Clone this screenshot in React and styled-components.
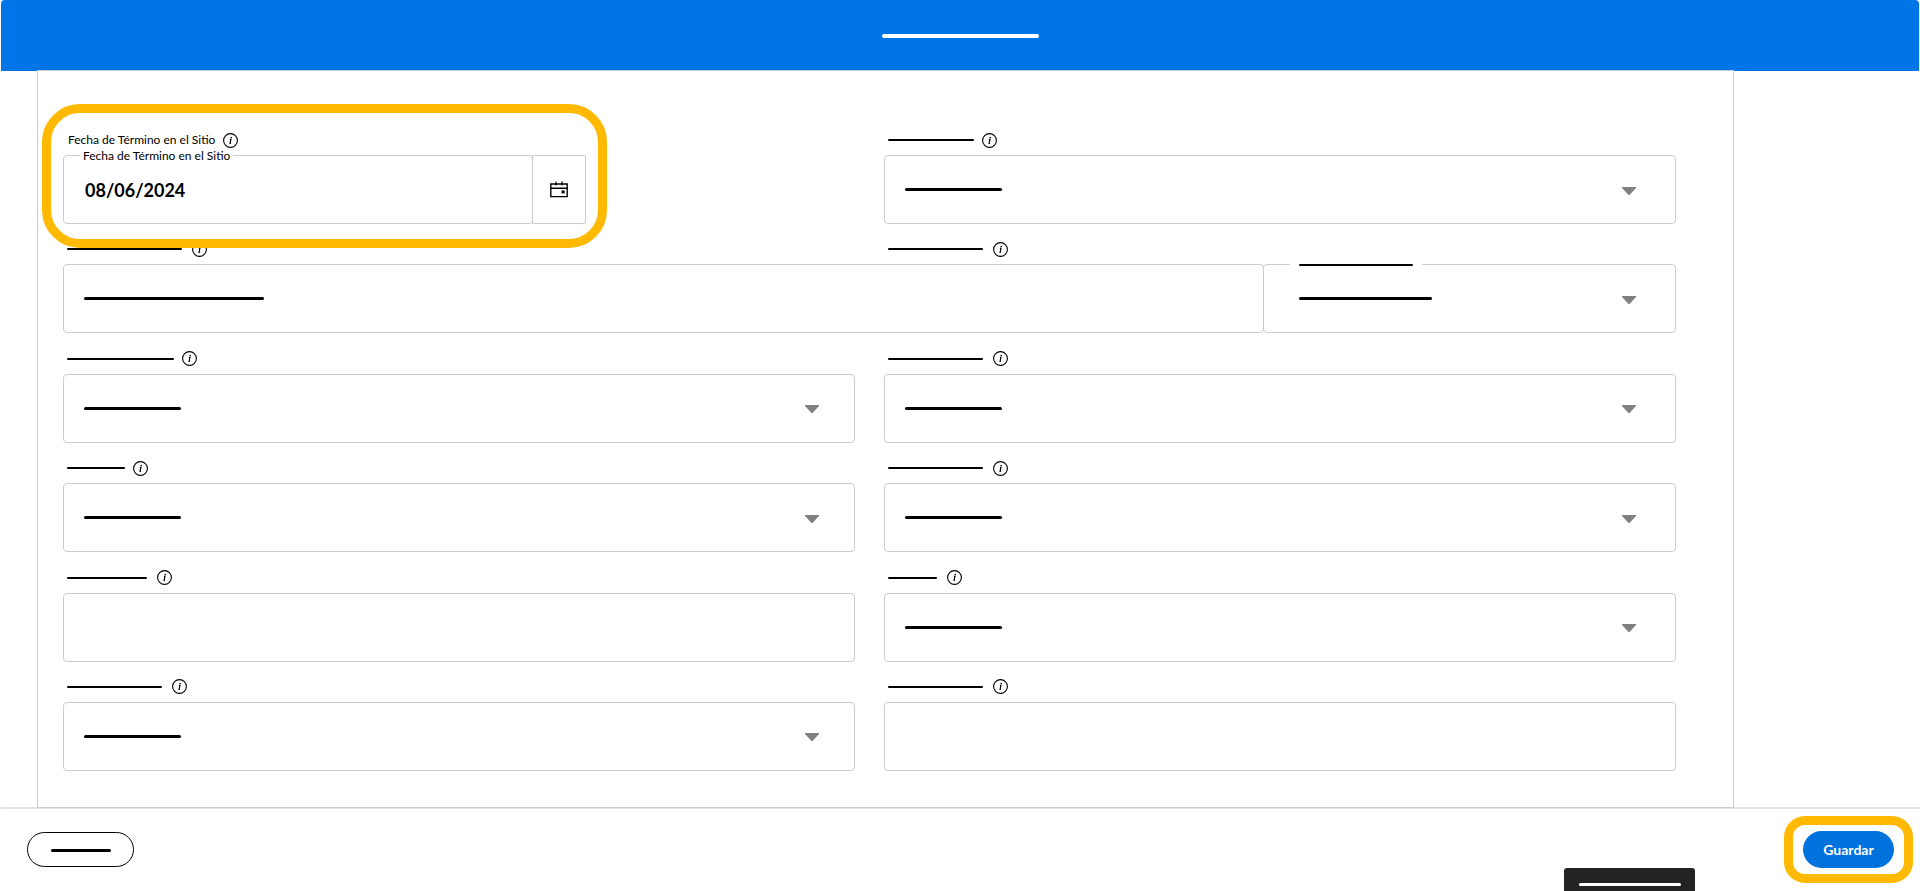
import React from 'react';
import styled, { createGlobalStyle, css } from 'styled-components';

// global styles
const GlobalStyle = createGlobalStyle`
    * {
        box-sizing: border-box;
    }

    body {
        margin: 0;
        background: #fff;
        color: #000;
        font-family: Lato, "Open Sans", sans-serif;
    }
`;

// styled components
const Page = styled.div`
    display: flex;
    flex-direction: column;
    min-height: 100vh;
`;

const Header = styled.header`
    display: flex;
    align-items: center;
    justify-content: center;
    height: 71px;
    margin: 0 1px;
    border-radius: 4px 4px 0 0;
    background: #0075e8;
`;

// stands in for a text that is masked
const Bar = styled.span`
    display: block;
    flex: none;
    width: ${({ $width }) => $width}px;
    height: ${({ $height }) => $height || 3}px;
    border-radius: 2px;
    background: ${({ $light }) => ($light ? '#fff' : '#000')};
`;

const Panel = styled.form`
    position: relative;
    display: grid;
    grid-template-columns: 1fr 1fr;
    column-gap: 29px;
    align-content: space-between;
    flex: 1;
    margin: -1px 186px -1px 37px;
    padding: 61px 57px 36px 25px;
    border: 1px solid #ccc;
    background: #fff;
`;

const Field = styled.div`
    min-width: 0;
`;

const WideField = styled.div`
    grid-column: 1 / -1;
`;

const DateField = styled.div`
    position: relative;
    width: 66%;
`;

const LabelColumns = styled.div`
    display: grid;
    grid-template-columns: 1fr 1fr;
    column-gap: 29px;
`;

const LabelRow = styled.div`
    display: flex;
    align-items: center;
    gap: ${({ $gap }) => $gap || 10}px;
    height: 16px;
    margin-bottom: 7px;
    padding-left: ${({ $indent }) => $indent || 4}px;
`;

const Label = styled.label`
    font-size: 12px;
    line-height: 16px;
    white-space: nowrap;
`;

const BoxRow = styled.div`
    display: flex;
`;

const Box = styled.div`
    position: relative;
    display: grid;
    flex: ${({ $basis }) => ($basis ? `0 0 ${$basis}px` : '1')};
    align-items: center;
    height: 69px;
    margin-left: ${({ $joined }) => ($joined ? -1 : 0)}px;
    border: 1px solid #ccc;
    border-radius: 4px;

    > * {
        grid-area: 1 / 1;
    }
`;

const control = css`
    width: 100%;
    height: 100%;
    padding: 0 21px;
    border: 0;
    border-radius: 4px;
    background: transparent;
    color: #000;
    font-family: inherit;
    font-size: 18px;
    font-weight: 700;
`;

const Input = styled.input`
    ${control}
`;

const Select = styled.select`
    ${control}
    appearance: none;
`;

const Value = styled.span`
    margin-left: ${({ $indent }) => $indent || 20}px;
    pointer-events: none;
`;

const Caret = styled.svg`
    justify-self: end;
    margin-top: 2px;
    margin-right: ${({ $inset }) => $inset}px;
    pointer-events: none;
`;

const Notch = styled.span`
    position: absolute;
    top: -8px;
    left: ${({ $left }) => $left}px;
    display: flex;
    align-items: center;
    height: 16px;
    padding: 0 ${({ $pad }) => $pad}px;
    background: #fff;
    font-size: 12px;
    line-height: 16px;
    white-space: nowrap;
`;

const DateButton = styled.button`
    display: flex;
    align-items: center;
    justify-content: center;
    width: 54px;
    height: 69px;
    margin-left: -1px;
    padding: 0;
    border: 1px solid #ccc;
    border-radius: 0 2px 2px 0;
    background: transparent;
`;

const DateHighlight = styled.div`
    position: absolute;
    z-index: 1;
    top: -28px;
    right: -21px;
    bottom: -24px;
    left: -21px;
    border: 9px solid #ffb900;
    border-radius: 38px;
    pointer-events: none;
`;

const Footer = styled.footer`
    display: flex;
    align-items: center;
    justify-content: space-between;
    height: 84px;
    margin-left: 1px;
    padding: 0 7px 2px 26px;
    border-top: 2px solid #e2e2e2;
`;

const OutlineButton = styled.button`
    display: flex;
    align-items: center;
    justify-content: center;
    width: 107px;
    height: 35px;
    padding: 2px 0 0;
    border: 1px solid #000;
    border-radius: 18px;
    background: #fff;
`;

const SaveHighlight = styled.div`
    padding: 6px 10px;
    border: 9px solid #ffb900;
    border-radius: 21px;
`;

const SaveButton = styled.button`
    display: block;
    width: 91px;
    height: 37px;
    padding: 0;
    border: 0;
    border-radius: 19px;
    background: #0072de;
    color: #fff;
    font-family: inherit;
    font-size: 14px;
    font-weight: 700;
`;

const Toast = styled.div`
    position: fixed;
    right: 225px;
    bottom: 0;
    display: flex;
    justify-content: center;
    width: 131px;
    height: 23px;
    padding-top: 15px;
    border-radius: 3px 3px 0 0;
    background: #232326;
`;

// icons
const InfoIcon = () => (
    <svg width="15" height="15" viewBox="0 0 15 15" fill="none" stroke="#000" aria-hidden="true">
        <circle cx="7.5" cy="7.5" r="6.9" strokeWidth="1.1" />
        <path d="M6.9 6.4h1L7.1 10.4h.8" strokeWidth="1.2" />
        <circle cx="8.2" cy="4.6" r=".8" fill="#000" stroke="none" />
    </svg>
);

const CalendarIcon = () => (
    <svg width="18" height="17" viewBox="0 0 18 17" fill="none" stroke="#000" aria-hidden="true">
        <path d="M.8 3h16.4v12.6H.8zM.8 7.2h16.4" strokeWidth="1.4" />
        <path d="M6 .5v4M12 .5v4" strokeWidth="1.2" />
        <path d="M11.6 9.4h3v3h-3z" fill="#000" stroke="none" />
    </svg>
);

const CaretIcon = ({ inset }) => (
    <Caret $inset={inset} width="14" height="8" viewBox="0 0 14 8" aria-hidden="true">
        <path d="M0 0h14v1L8 7.4Q7 8.4 6 7.4L0 1z" fill="#808080" />
    </Caret>
);

// presentational components
const MaskedLabel = ({ width, gap, htmlFor }) => (
    <LabelRow $gap={gap}>
        <Label htmlFor={htmlFor}>
            <Bar $height={2} $width={width} />
        </Label>
        <InfoIcon />
    </LabelRow>
);

const SelectField = ({ id, label, gap, right }) => (
    <Field>
        <MaskedLabel htmlFor={id} width={label} gap={gap} />
        <Box>
            <Select id={id} />
            <Value>
                <Bar $width={97} />
            </Value>
            <CaretIcon inset={right ? 39 : 35} />
        </Box>
    </Field>
);

const TextField = ({ id, label, gap }) => (
    <Field>
        <MaskedLabel htmlFor={id} width={label} gap={gap} />
        <Box>
            <Input id={id} type="text" />
        </Box>
    </Field>
);

const EndDateField = () => (
    <DateField>
        <LabelRow $gap={8} $indent={5}>
            <Label htmlFor="end-date">Fecha de Término en el Sitio</Label>
            <InfoIcon />
        </LabelRow>
        <BoxRow>
            <Box>
                <Input id="end-date" type="text" defaultValue="08/06/2024" />
                <Notch $left={16} $pad={3}>Fecha de Término en el Sitio</Notch>
            </Box>
            <DateButton type="button" aria-label="Fecha de Término en el Sitio">
                <CalendarIcon />
            </DateButton>
        </BoxRow>
        <DateHighlight />
    </DateField>
);

const CombinedField = () => (
    <WideField>
        <LabelColumns>
            <MaskedLabel htmlFor="detail" width={115} />
            <MaskedLabel htmlFor="detail-type" width={95} />
        </LabelColumns>
        <BoxRow>
            <Box>
                <Input id="detail" type="text" />
                <Value>
                    <Bar $width={180} />
                </Value>
            </Box>
            <Box $basis={413} $joined>
                <Select id="detail-type" />
                <Notch $left={26} $pad={9}>
                    <Bar $height={2} $width={114} />
                </Notch>
                <Value $indent={35}>
                    <Bar $width={133} />
                </Value>
                <CaretIcon inset={39} />
            </Box>
        </BoxRow>
    </WideField>
);

export default function App() {
    return (
        <Page>
            <GlobalStyle />
            <Header>
                <Bar $light $height={4} $width={157} />
            </Header>
            <Panel>
                <EndDateField />
                <SelectField id="field-1" label={86} gap={8} right />
                <CombinedField />
                <SelectField id="field-2" label={107} gap={8} />
                <SelectField id="field-3" label={95} right />
                <SelectField id="field-4" label={58} gap={8} />
                <SelectField id="field-5" label={95} right />
                <TextField id="field-6" label={80} />
                <SelectField id="field-7" label={49} right />
                <SelectField id="field-8" label={95} />
                <TextField id="field-9" label={95} />
            </Panel>
            <Footer>
                <OutlineButton type="button">
                    <Bar $width={60} />
                </OutlineButton>
                <SaveHighlight>
                    <SaveButton type="button">Guardar</SaveButton>
                </SaveHighlight>
            </Footer>
            <Toast>
                <Bar $light $width={102} />
            </Toast>
        </Page>
    );
}
